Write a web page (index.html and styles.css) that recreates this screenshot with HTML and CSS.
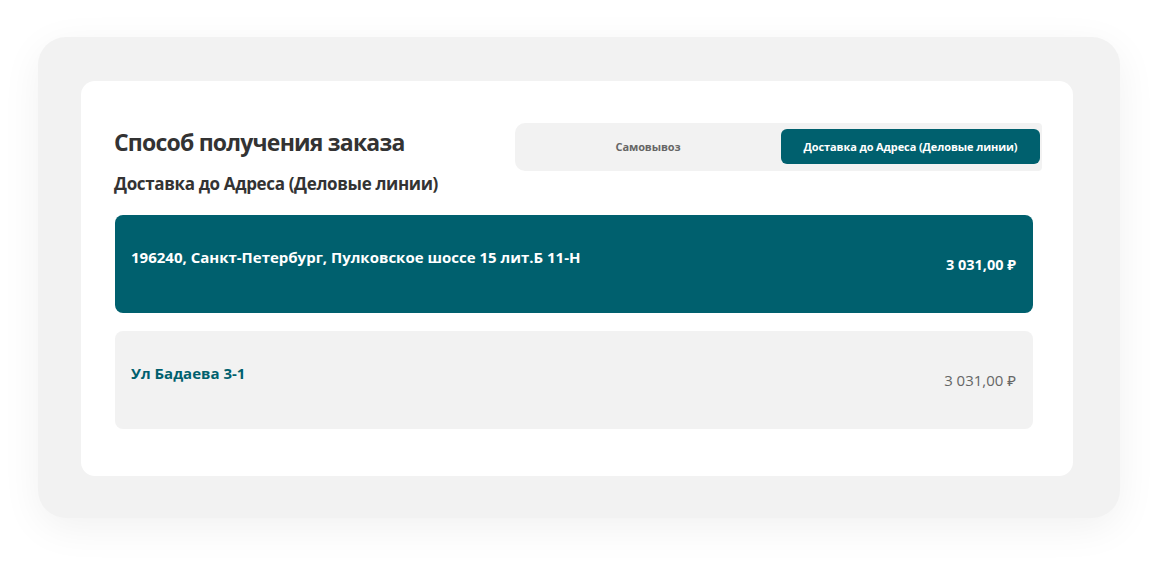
FILE: index.html
```html
<!DOCTYPE html>
<html lang="ru">
<head>
  <meta charset="UTF-8">
  <meta name="viewport" content="width=device-width, initial-scale=1.0">
  <title>Способ получения заказа</title>
  <link rel="stylesheet" href="styles.css">
</head>
<body>
  <div class="frame">
    <div class="card">
      <div class="card-head">
        <div class="titles">
          <h2 class="title">Способ получения заказа</h2>
          <div class="subtitle">Доставка до Адреса (Деловые линии)</div>
        </div>
        <div class="tabs">
          <button class="tab">Самовывоз</button>
          <button class="tab tab-active">Доставка до Адреса (Деловые линии)</button>
        </div>
      </div>

      <ul class="addresses">
        <li class="address address-active">
          <span class="address-name">196240, Санкт-Петербург, Пулковское шоссе 15 лит.Б 11-Н</span>
          <span class="address-price">3 031,00 ₽</span>
        </li>
        <li class="address">
          <span class="address-name">Ул Бадаева 3-1</span>
          <span class="address-price">3 031,00 ₽</span>
        </li>
      </ul>
    </div>
  </div>
</body>
</html>
```

FILE: styles.css
```css
* {
  box-sizing: border-box;
}

body {
  margin: 0;
  padding: 37px 44px 47px 38px;
  background: #fff;
  font-family: "Open Sans", "Noto Sans", sans-serif;
  color: #333;
}

/* серая подложка с мягкой тенью */
.frame {
  background: #f2f2f2;
  border-radius: 28px;
  padding: 44px 47px 42px 43px;
  box-shadow: 0 10px 40px rgba(0, 0, 0, 0.06);
}

.card {
  background: #fff;
  border-radius: 14px;
  padding: 42px 31px 47px 33px;
}

.card-head {
  display: flex;
  justify-content: space-between;
  align-items: flex-start;
}

.title {
  margin: 3px 0 0;
  font-size: 23px;
  line-height: 32px;
  font-weight: 700;
  letter-spacing: -0.8px;
  color: #333;
}

.subtitle {
  margin-top: 14px;
  font-size: 17px;
  line-height: 24px;
  font-weight: 700;
  letter-spacing: -0.35px;
  color: #333;
}

.tabs {
  display: flex;
  width: 527px;
  padding: 6px 2px 7px 0;
  background: #f2f2f2;
  border-radius: 10px 4px 4px 10px;
}

.tab {
  flex: 1;
  height: 35px;
  border: 0;
  border-radius: 6px;
  background: none;
  font-family: inherit;
  font-size: 11px;
  font-weight: 700;
  letter-spacing: -0.1px;
  color: #666;
  cursor: pointer;
}

.tab-active {
  flex: 0 0 259px;
  background: #00606e;
  color: #fff;
}

.addresses {
  list-style: none;
  margin: 19px 9px 0 1px;
  padding: 0;
  display: flex;
  flex-direction: column;
  gap: 18px;
}

.address {
  display: flex;
  justify-content: space-between;
  align-items: center;
  height: 98px;
  padding: 0 17px 0 16px;
  background: #f2f2f2;
  border-radius: 8px;
}

.address-name {
  align-self: flex-start;
  margin-top: 32px;
  font-size: 15px;
  font-weight: 700;
  letter-spacing: 0;
  color: #00606e;
}

.address-price {
  font-size: 15px;
  letter-spacing: 0;
  color: #666;
}

.address-active {
  background: #00606e;
}

.address-active .address-name,
.address-active .address-price {
  color: #fff;
}

.address-active .address-price {
  font-weight: 700;
  font-size: 14.5px;
}
```
